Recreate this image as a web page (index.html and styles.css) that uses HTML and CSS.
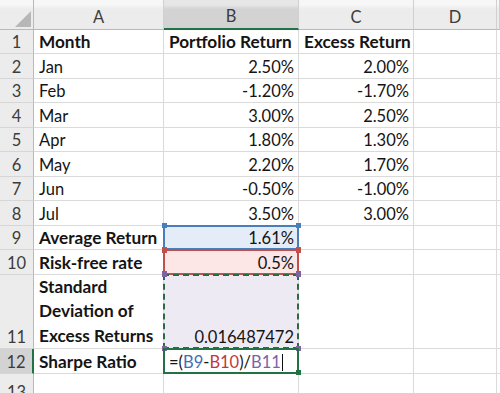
FILE: index.html
```html
<!DOCTYPE html>
<html>
<head>
<meta charset="utf-8">
<link rel="stylesheet" href="styles.css">
</head>
<body>
<div class="sheet">
  <div class="ch corner"><svg width="18" height="18" viewBox="0 0 18 18"><polygon points="17,1 17,17 1,17" fill="#b7b7b7"/></svg></div>
  <div class="ch">A</div>
  <div class="ch ch-sel">B</div>
  <div class="ch">C</div>
  <div class="ch">D</div>
  <div class="ch"></div>

  <div class="rh">1</div>
  <div class="c b">Month</div>
  <div class="c b">Portfolio Return</div>
  <div class="c b">Excess Return</div>
  <div class="c"></div><div class="c"></div>

  <div class="rh">2</div>
  <div class="c">Jan</div>
  <div class="c num">2.50%</div>
  <div class="c num">2.00%</div>
  <div class="c"></div><div class="c"></div>

  <div class="rh">3</div>
  <div class="c">Feb</div>
  <div class="c num">-1.20%</div>
  <div class="c num">-1.70%</div>
  <div class="c"></div><div class="c"></div>

  <div class="rh">4</div>
  <div class="c">Mar</div>
  <div class="c num">3.00%</div>
  <div class="c num">2.50%</div>
  <div class="c"></div><div class="c"></div>

  <div class="rh">5</div>
  <div class="c">Apr</div>
  <div class="c num">1.80%</div>
  <div class="c num">1.30%</div>
  <div class="c"></div><div class="c"></div>

  <div class="rh">6</div>
  <div class="c">May</div>
  <div class="c num">2.20%</div>
  <div class="c num">1.70%</div>
  <div class="c"></div><div class="c"></div>

  <div class="rh">7</div>
  <div class="c">Jun</div>
  <div class="c num">-0.50%</div>
  <div class="c num">-1.00%</div>
  <div class="c"></div><div class="c"></div>

  <div class="rh">8</div>
  <div class="c">Jul</div>
  <div class="c num">3.50%</div>
  <div class="c num">3.00%</div>
  <div class="c"></div><div class="c"></div>

  <div class="rh">9</div>
  <div class="c b">Average Return</div>
  <div class="c num refcell fill-blue">1.61%<span class="ref ref-blue"><i class="h tl"></i><i class="h tr"></i><i class="h bl"></i><i class="h br"></i></span></div>
  <div class="c"></div>
  <div class="c"></div><div class="c"></div>

  <div class="rh">10</div>
  <div class="c b">Risk-free rate</div>
  <div class="c num refcell fill-red">0.5%<span class="ref ref-red"><i class="h tl"></i><i class="h tr"></i><i class="h bl"></i><i class="h br"></i></span></div>
  <div class="c"></div>
  <div class="c"></div><div class="c"></div>

  <div class="rh">11</div>
  <div class="c b wrap">Standard<br>Deviation of<br>Excess Returns</div>
  <div class="c num refcell fill-purple">0.016487472<span class="ref ref-purple"><i class="h tl"></i><i class="h tr"></i><i class="h bl"></i><i class="h br"></i></span></div>
  <div class="c"></div>
  <div class="c"></div><div class="c"></div>

  <div class="rh rh-sel">12</div>
  <div class="c b">Sharpe Ratio</div>
  <div class="c refcell">=(<span class="t-blue">B9</span>-<span class="t-red">B10</span>)/<span class="t-purple">B11</span><span class="caret"></span><span class="ref ref-active"><i class="h br"></i></span></div>
  <div class="c"></div>
  <div class="c"></div><div class="c"></div>

  <div class="rh">13</div>
  <div class="c"></div>
  <div class="c"></div>
  <div class="c"></div>
  <div class="c"></div><div class="c"></div>
</div>
</body>
</html>
```

FILE: styles.css
```css
html, body {
  margin: 0;
  padding: 0;
  background: #ffffff;
}

body {
  font-family: Lato, "Open Sans", sans-serif;
  overflow: hidden;
}

.sheet {
  display: grid;
  grid-template-columns: 34px 130px 135px 115px 83px 3px;
  grid-template-rows: 29.5px repeat(10, 24.55px) 74.3px 24.7px 30px;
  width: 500px;
  height: 393px;
  overflow: hidden;
}

.sheet > div {
  box-sizing: border-box;
}

.ch {
  display: flex;
  align-items: center;
  justify-content: center;
  padding-top: 5px;
  background: linear-gradient(#f7f7f7 0, #f7f7f7 5px, #ececec 9px, #ececec 100%);
  border-right: 1px solid #d0d0d0;
  border-bottom: 1px solid #b9b9b9;
  font-size: 16.5px;
  color: #3c3c3c;
}

.corner {
  justify-content: flex-end;
  align-items: flex-end;
  padding: 0 1px 1px 0;
  border-right: 1px solid #b9b9b9;
}

.corner svg {
  display: block;
}

.ch-sel {
  background: linear-gradient(#e6e6e6 0, #e6e6e6 5px, #d3d3d3 9px, #d3d3d3 100%);
  border-bottom: 2px solid #217346;
}

.rh {
  display: flex;
  align-items: flex-end;
  justify-content: center;
  padding-bottom: 1px;
  background: #ececec;
  border-right: 1px solid #b9b9b9;
  border-bottom: 1px solid #d6d6d6;
  font-size: 16.5px;
  line-height: 20px;
  color: #3c3c3c;
}

.rh-sel {
  background: #d3d3d3;
  border-right: 2px solid #217346;
}

.c {
  display: flex;
  align-items: flex-end;
  padding: 0 4px 1px 5px;
  border-right: 1px solid #dadada;
  border-bottom: 1px solid #dadada;
  font-size: 16.5px;
  line-height: 20px;
  color: #141414;
  white-space: nowrap;
}

.b {
  font-weight: 700;
  font-size: 17.2px;
}

.num {
  justify-content: flex-end;
}

.wrap {
  display: block;
  padding-top: 0;
  padding-bottom: 0;
  line-height: 24.5px;
}

.refcell {
  position: relative;
}

.fill-blue { background: #e4ecf7; }
.fill-red { background: #fce6e6; }
.fill-purple { background: #edeaf4; }

.ref {
  position: absolute;
  top: -1px;
  left: -1px;
  right: -1px;
  bottom: -1px;
  z-index: 1;
  box-sizing: border-box;
}

.ref-blue { border: 2px solid #4a7ebb; }
.ref-red { border: 2px solid #c0504d; }
.ref-purple { border: 2px dashed #2c6a45; }
.ref-active { border: 2px solid #217346; }

.h {
  position: absolute;
  width: 5px;
  height: 5px;
}

.h.tl { top: -3.5px; left: -3.5px; }
.h.tr { top: -3.5px; right: -3.5px; }
.h.bl { bottom: -3.5px; left: -3.5px; }
.h.br { bottom: -3.5px; right: -3.5px; }

.ref-blue .h { background: #4a7ebb; }
.ref-red .h { background: #c0504d; }
.ref-purple .h { background: #8064a2; }
.ref-active .h { background: #217346; }

.t-blue { color: #3f6fb6; }
.t-red { color: #c0393b; }
.t-purple { color: #7e61a8; }

.caret {
  display: inline-block;
  width: 1px;
  height: 17px;
  margin-left: 1px;
  margin-bottom: 1px;
  background: #111;
}
```
